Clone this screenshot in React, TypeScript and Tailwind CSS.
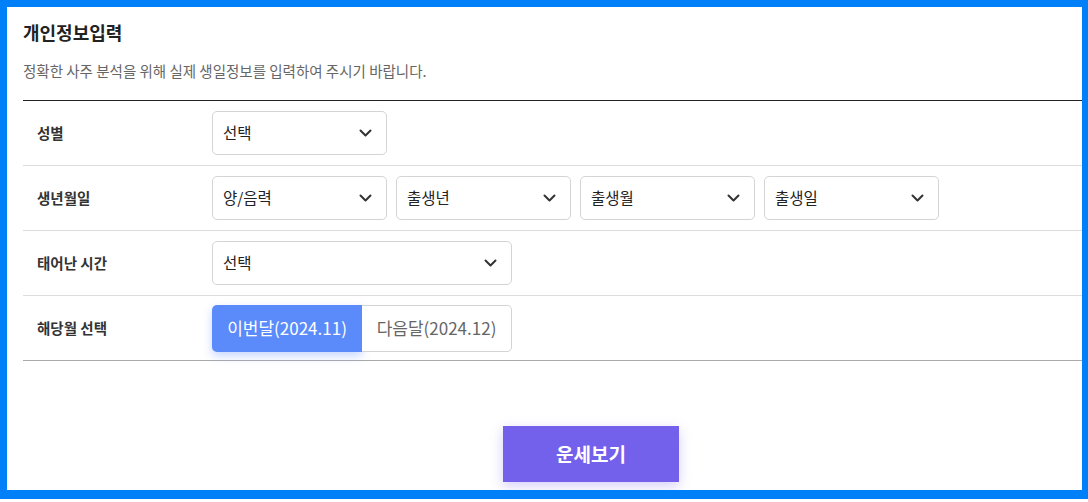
const font = { fontFamily: '"Noto Sans CJK KR", "Noto Sans", sans-serif' };

function Chevron() {
  return (
    <svg width="13" height="8" viewBox="0 0 13 8" fill="none">
      <polyline
        points="1.5,1.5 6.5,6.5 11.5,1.5"
        stroke="#333"
        strokeWidth="2"
        strokeLinecap="round"
        strokeLinejoin="round"
      />
    </svg>
  );
}

function Select({ label, width = "w-[175px]" }: { label: string; width?: string }) {
  return (
    <div
      className={`${width} h-[44px] flex items-center justify-between pl-[10px] pr-[14px] border border-[#d4d4d4] rounded-[5px] bg-white`}
    >
      <span className="text-[15.5px] text-[#222]">{label}</span>
      <Chevron />
    </div>
  );
}

function Row({
  label,
  children,
  last = false,
}: {
  label: string;
  children: React.ReactNode;
  last?: boolean;
}) {
  return (
    <div
      className={`flex items-center h-[65px] border-b ${
        last ? "border-[#aaaaaa]" : "border-[#dddddd]"
      }`}
    >
      <div className="w-[189px] pl-[14px] text-[14.5px] font-bold text-[#333]">
        {label}
      </div>
      <div className="flex gap-[9px]">{children}</div>
    </div>
  );
}

export default function App() {
  return (
    <div className="w-[1088px] h-[502px] bg-white" style={font}>
      <div className="h-[499px] border-[#0080f8] border-t-[7px] border-l-[7px] border-r-[6px] border-b-[9px] overflow-hidden">
        <div className="ml-4 w-[1136px]">
          <h1 className="pt-[12px] text-[18px] leading-[26px] font-bold text-[#222]">
            개인정보입력
          </h1>
          <p className="mt-[16px] text-[14.5px] leading-[20px] text-[#666]">
            정확한 사주 분석을 위해 실제 생일정보를 입력하여 주시기 바랍니다.
          </p>

          <div className="mt-[19px] border-t border-[#222]">
            <Row label="성별">
              <Select label="선택" />
            </Row>
            <Row label="생년월일">
              <Select label="양/음력" />
              <Select label="출생년" />
              <Select label="출생월" />
              <Select label="출생일" />
            </Row>
            <Row label="태어난 시간">
              <Select label="선택" width="w-[300px]" />
            </Row>
            <Row label="해당월 선택" last>
              <div className="flex">
                <button className="w-[150px] h-[47px] rounded-l-[5px] bg-[#5b8bfb] text-white text-[17px] shadow-[0_4px_10px_rgba(91,139,251,0.35)]">
                  이번달(2024.11)
                </button>
                <button className="w-[150px] h-[47px] rounded-r-[5px] border border-l-0 border-[#d4d4d4] bg-white text-[#666] text-[17px]">
                  다음달(2024.12)
                </button>
              </div>
            </Row>
          </div>

          <div className="mt-[65px] flex justify-center">
            <button className="w-[176px] h-[56px] bg-[#7360eb] text-white text-[19px] font-bold shadow-[0_4px_12px_rgba(115,96,235,0.3)]">
              운세보기
            </button>
          </div>
        </div>
      </div>
    </div>
  );
}
